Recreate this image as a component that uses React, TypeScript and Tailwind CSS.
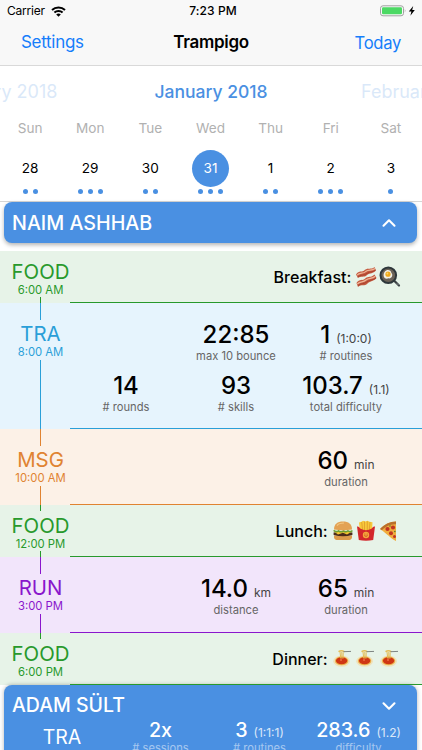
import { ReactNode } from 'react'
import { ChevronDown, ChevronUp } from 'lucide-react'
import clsx from 'clsx'

const days = [
  { name: 'Sun', date: 28, dots: 2 },
  { name: 'Mon', date: 29, dots: 3 },
  { name: 'Tue', date: 30, dots: 2 },
  { name: 'Wed', date: 31, dots: 3, selected: true },
  { name: 'Thu', date: 1, dots: 2 },
  { name: 'Fri', date: 2, dots: 3 },
  { name: 'Sat', date: 3, dots: 1 },
]

const Bacon = () => (
  <svg width="22" height="22" viewBox="0 0 22 22">
    <path d="M1 8.5 C4 4 7 7 10 3.8 C13 1.5 16 4 19.5 1 L21 4.5 C18 8 15 6.5 12 9 C9 12 6 9.5 3 12 Z" fill="#c4593f" />
    <path d="M2 9.2 C5 6 8 8.4 11 5.3 C14 3.2 17 5.3 20 2.5" stroke="#efb79a" strokeWidth="1.2" fill="none" />
    <path d="M2.8 11 C6 8 9 10 12 7.4 C15 5.2 18 6.5 20.6 4" stroke="#a23c2b" strokeWidth=".8" fill="none" />
    <path d="M1.5 17 C4.5 12.5 7.5 15.5 10.5 12.3 C13.5 10 16 12 19.5 8.5 L21.5 12 C18.5 15.8 15.5 14.5 12.5 17.5 C9.5 20.5 6.5 18 3 21 Z" fill="#c4593f" />
    <path d="M2.3 18 C5.5 14.5 8 17 11 14 C14 11.5 17 13.3 20.3 10.2" stroke="#efb79a" strokeWidth="1.2" fill="none" />
    <path d="M3 19.6 C6 16.8 9 18.5 12 15.8 C15 13.6 18 14.5 21 12" stroke="#a23c2b" strokeWidth=".8" fill="none" />
  </svg>
)

const Pan = () => (
  <svg width="22" height="22" viewBox="0 0 22 22">
    <path d="M14.5 14 L20 19.5" stroke="#3a4043" strokeWidth="2.2" strokeLinecap="round" />
    <path d="M17.8 17.3 L19.6 19.1" stroke="#8d9496" strokeWidth=".9" />
    <circle cx="9.3" cy="9.3" r="7.8" fill="#6b6258" stroke="#2e373b" strokeWidth="2" />
    <path d="M5.5 6 C8 2.5 12 4 12.4 7 C14.5 9 12.5 13 9.5 12.3 C6 14 3 10.5 5.5 6 Z" fill="#f2efe6" />
    <circle cx="9" cy="8.2" r="2.6" fill="#f0a81c" />
    <circle cx="8.4" cy="7.5" r=".9" fill="#fbd568" />
  </svg>
)

const Burger = () => (
  <svg width="22" height="22" viewBox="0 0 22 22">
    <path d="M2 15.5 H20 V17 C20 19.6 18 20 16 20 H6 C4 20 2 19.6 2 17 Z" fill="#dc9a4b" />
    <path d="M1.6 12.6 Q11 11 20.4 12.6 V15 Q11 17.6 1.6 15 Z" fill="#4c2b1b" />
    <path d="M2 11.6 L20 11.6 L15 14.6 L11 12.8 L6 14.4 Z" fill="#f8c62e" />
    <path d="M1.6 10.4 Q4 12.6 6.5 10.8 Q9 12.8 11.5 10.8 Q14 12.8 16 10.8 Q18.5 12.6 20.4 10.4" stroke="#6f9f34" strokeWidth="1.5" fill="none" />
    <path d="M2 9.6 C2 4 5.5 1.6 11 1.6 C16.5 1.6 20 4 20 9.6 Q11 11.2 2 9.6 Z" fill="#e3a254" />
    <path d="M5 5.6 C6.5 3.6 9 3 12 3" stroke="#f3c783" strokeWidth="1.2" fill="none" />
  </svg>
)

const Fries = () => (
  <svg width="22" height="22" viewBox="0 0 22 22">
    <path d="M4 2.5 L6.5 1.8 L8 .8 L10.5 1.5 L12.5 .8 L14.5 1.8 L17.5 2.2 L17 12 H5 Z" fill="#f8c93c" />
    <path d="M6.7 2 L7.6 10 M9.5 1.5 V10 M12.3 1.3 V10 M15 2 L14.3 10" stroke="#d8932a" strokeWidth=".7" />
    <path d="M2 6.5 Q4 6 5.2 8.5 Q11 12 16.8 8.5 Q18 6 20 6.5 L18.2 20 Q11 21.6 3.8 20 Z" fill="#d3272b" />
    <circle cx="11" cy="15" r="3.2" fill="#f4a83a" />
    <path d="M9.3 15.5 Q11 17.3 12.7 15.5" stroke="#c9382a" strokeWidth=".8" fill="none" />
    <circle cx="9.9" cy="14" r=".5" fill="#c9382a" />
    <circle cx="12.1" cy="14" r=".5" fill="#c9382a" />
  </svg>
)

const Pizza = () => (
  <svg width="22" height="22" viewBox="0 0 22 22">
    <path d="M1 9 C5 4.5 11 1.5 17 1.5 V21 C12 18.500 7 13 1 9 Z" fill="#f0ad3d" />
    <path d="M1 9 C5 4.5 11 1.5 17 1.5 V4.3 C11 4 6 7 3 10.2 Z" fill="#b96f2c" />
    <circle cx="8.5" cy="9" r="2.1" fill="#c13422" />
    <circle cx="14" cy="7.5" r="2.1" fill="#c13422" />
    <circle cx="12" cy="13.3" r="2" fill="#c13422" />
    <circle cx="15.5" cy="16.5" r="1.5" fill="#c13422" />
    <circle cx="11" cy="6" r=".8" fill="#547a2c" />
    <circle cx="15.8" cy="11.5" r=".8" fill="#547a2c" />
  </svg>
)

const Spaghetti = () => (
  <svg width="22" height="22" viewBox="0 0 22 22">
    <ellipse cx="9.600" cy="13.200" rx="8.400" ry="5.600" fill="#efe2bb" />
    <ellipse cx="9.600" cy="12.900" rx="6.700" ry="4.300" fill="#edb24a" />
    <ellipse cx="9.600" cy="12.700" rx="5.700" ry="3.500" fill="#cf3614" />
    <path d="M8.800 10.500 L8 4 M9.900 10.500 L9.800 4 M11 10.500 L11.200 4.500" stroke="#e4bd55" strokeWidth="1" />
    <path d="M6.500 3.600 Q9.500 1.600 12.500 3.800" stroke="#e4bd55" strokeWidth="1.500" fill="none" />
    <path d="M11.500 3.700 L19 3.400" stroke="#7f8583" strokeWidth="1" />
    <circle cx="9" cy="12" r="1.100" fill="#ec6a3d" />
  </svg>
)

function StatusBar() {
  return (
    <div className="grid h-5 grid-cols-3 items-center pt-0.5 pr-1.5 pl-[7px] text-[12px] leading-none text-black">
      <div className="flex items-center gap-1.5">
        <span className="tracking-[-0.2px]">Carrier</span>
        <svg width="15" height="11" viewBox="0 0 15 11" fill="none" stroke="#000" strokeWidth="2">
          <path d="M1 4 C4.6 .6 10.4 .6 14 4" />
          <path d="M3.4 6.6 C5.7 4.5 9.3 4.5 11.6 6.6" />
          <path d="M7.5 10.7 L5.2 8.4 C6.5 7.2 8.5 7.2 9.8 8.4 Z" fill="#000" stroke="none" />
        </svg>
      </div>
      <span className="pl-[3px] text-center font-medium tracking-[0.1px]">7:23 PM</span>
      <div className="flex items-center justify-end">
        <svg width="36" height="12" viewBox="0 0 36 12">
          <rect x=".5" y=".8" width="23" height="10" rx="2.5" fill="none" stroke="#a1a1a1" />
          <rect x="2" y="2.3" width="20" height="7" rx="1.2" fill="#4cd964" />
          <path d="M24.800 4 Q26.200 5.800 24.800 7.600 Z" fill="#a1a1a1" />
          <path d="M33.200 1 L28.800 6.600 H31.400 L30.400 10.800 L34.800 5 H32.200 Z" fill="#000" />
        </svg>
      </div>
    </div>
  )
}

function Calendar() {
  return (
    <div className="h-[136px] border-b border-[#d6d6d6] bg-white">
      <div className="flex justify-center overflow-hidden pt-3.5 text-[17.5px] leading-6 font-medium text-[#4a90e2]">
        <span className="w-[211px] shrink-0 text-center text-[18px] font-normal opacity-20">January 2018</span>
        <span className="w-[211px] shrink-0 text-center">January 2018</span>
        <span className="w-[211px] shrink-0 text-center text-[18px] font-normal opacity-20">February 2018</span>
      </div>
      <div className="mt-3.5 grid w-[421px] grid-cols-7 text-center">
        {days.map((day) => (
          <div key={day.name} className="flex flex-col items-center">
            <span className="text-[13.6px] leading-5 text-[#b1b1b1]">{day.name}</span>
            <span
              className={clsx(
                'mt-3 flex size-[37px] items-center justify-center rounded-full text-[13.6px]',
                day.selected ? 'bg-[#4a90e2] text-white' : 'text-black'
              )}
            >
              {day.date}
            </span>
            <div className="mt-[1.5px] flex gap-[5px]">
              {Array.from({ length: day.dots }, (_, i) => (
                <span key={i} className="size-[5px] rounded-full bg-[#4a90e2]" />
              ))}
            </div>
          </div>
        ))}
      </div>
    </div>
  )
}

interface StatProps {
  value: string
  unit?: string
  label: string
}

function Stat({ value, unit, label }: StatProps) {
  return (
    <div className="flex flex-col items-center whitespace-nowrap">
      <div className="h-7 text-[24px] leading-[28px] font-medium text-black">
        {value}
        {unit && <span className="ml-1.5 text-[12px] leading-none font-normal text-[#444]">{unit}</span>}
      </div>
      <span className="text-[11.2px] leading-[15px] text-[#666]">{label}</span>
    </div>
  )
}

interface EventProps {
  label: string
  time: string
  className: string
  first?: boolean
  last?: boolean
  meal?: boolean
  children: ReactNode
}

// One timeline entry, the text color drives the rail and the divider
function Event({ label, time, className, first, last, meal, children }: EventProps) {
  return (
    <div className={clsx('flex', className)}>
      <div className="-mr-[11.5px] flex w-[81px] flex-col items-center">
        <div className={clsx('w-px', meal ? 'h-1.5' : 'h-[17px]', !first && 'bg-current')} />
        <div className={clsx('flex h-10 flex-col items-center', meal && 'pt-px')}>
          <span className="text-[20.4px] leading-[27px]">{label}</span>
          <span className="text-[11.3px] leading-[10px]">{time}</span>
        </div>
        <div className={clsx('w-px flex-1', !last && 'bg-current')} />
      </div>
      <div className="flex-1 border-b border-current pr-[21px]">{children}</div>
    </div>
  )
}

function Meal({ name, children }: { name: string; children: ReactNode }) {
  return (
    <div className="flex h-full items-center justify-end gap-1 text-[16px] font-medium text-black">
      <span>{name}:</span>
      <div className="flex gap-[1.7px]">{children}</div>
    </div>
  )
}

function SummaryStat({ value, unit, label }: StatProps) {
  return (
    <div className="flex flex-col items-center whitespace-nowrap">
      <div className="h-6 text-[19.7px] leading-6 font-medium">
        {value}
        {unit && <span className="ml-1.5 text-[12px] leading-none font-normal opacity-80">{unit}</span>}
      </div>
      <span className="text-[11.2px] leading-3 opacity-50">{label}</span>
    </div>
  )
}

export default function App() {
  return (
    <div className="h-[750px] w-[422px] overflow-hidden bg-white font-['Inter',sans-serif]">
      <header className="h-[66px] border-b border-[#d9d9d9] bg-[#f8f8f8]">
        <StatusBar />
        <nav className="grid h-[46px] grid-cols-3 items-center px-[21px] text-[17px] tracking-[-0.3px] text-[#157efb]">
          <span>Settings</span>
          <h1 className="text-center font-semibold text-black">Trampigo</h1>
          <span className="text-right text-[16.6px]">Today</span>
        </nav>
      </header>

      <Calendar />

      <div className="mr-[5px] ml-1 flex h-[41px] items-center justify-between rounded-lg bg-[#4a90e2] pr-[17px] pl-2 text-white shadow-[0_2px_4px_rgba(0,0,0,0.3)]">
        <h2 className="pt-0.5 text-[19.7px] font-medium">NAIM ASHHAB</h2>
        <ChevronUp size={22} strokeWidth={2.3} />
      </div>

      <main className="mt-2">
        <Event label="FOOD" time="6:00 AM" meal first className="h-[52px] bg-[#e7f3e8] text-[#28992c]">
          <Meal name="Breakfast">
            <Bacon />
            <Pan />
          </Meal>
        </Event>
        <Event label="TRA" time="8:00 AM" className="h-[126px] bg-[#e6f4fd] text-[#2a9fd8]">
          <div className="grid grid-cols-[110px_110px_110px] gap-y-2 pt-[18px] pl-[1.5px]">
            <div className="col-start-2">
              <Stat value="22:85" label="max 10 bounce" />
            </div>
            <Stat value="1" unit="(1:0:0)" label="# routines" />
            <Stat value="14" label="# rounds" />
            <Stat value="93" label="# skills" />
            <Stat value="103.7" unit="(1.1)" label="total difficulty" />
          </div>
        </Event>
        <Event label="MSG" time="10:00 AM" className="h-[76px] bg-[#fcf1e7] text-[#e08331]">
          <div className="grid grid-cols-[110px_110px_110px] pt-[18px] pl-[1.5px]">
            <div className="col-start-3">
              <Stat value="60" unit="min" label="duration" />
            </div>
          </div>
        </Event>
        <Event label="FOOD" time="12:00 PM" meal className="h-[52px] bg-[#e7f3e8] text-[#28992c]">
          <Meal name="Lunch">
            <Burger />
            <Fries />
            <Pizza />
          </Meal>
        </Event>
        <Event label="RUN" time="3:00 PM" className="h-[76px] bg-[#f2e5fb] text-[#8a16cc]">
          <div className="grid grid-cols-[110px_110px_110px] pt-[18px] pl-[1.5px]">
            <div className="col-start-2">
              <Stat value="14.0" unit="km" label="distance" />
            </div>
            <Stat value="65" unit="min" label="duration" />
          </div>
        </Event>
        <Event label="FOOD" time="6:00 PM" meal last className="h-[52px] bg-[#e7f3e8] text-[#28992c]">
          <Meal name="Dinner">
            <Spaghetti />
            <Spaghetti />
            <Spaghetti />
          </Meal>
        </Event>
      </main>

      <section className="mr-[5px] ml-1 h-[100px] rounded-lg bg-[#4a90e2] text-white shadow-[0_0_4px_rgba(0,0,0,0.3)]">
        <div className="flex h-[33px] items-center justify-between pt-2 pr-[17px] pl-2">
          <h2 className="text-[19.5px] font-medium">ADAM SÜLT</h2>
          <ChevronDown size={22} strokeWidth={2.3} />
        </div>
        <div className="grid grid-cols-[107px_99px_99px_99px]">
          <span className="pt-1.5 pl-[9px] text-center text-[19.5px] leading-[26px]">TRA</span>
          <SummaryStat value="2x" label="# sessions" />
          <SummaryStat value="3" unit="(1:1:1)" label="# routines" />
          <SummaryStat value="283.6" unit="(1.2)" label="difficulty" />
        </div>
      </section>
    </div>
  )
}
